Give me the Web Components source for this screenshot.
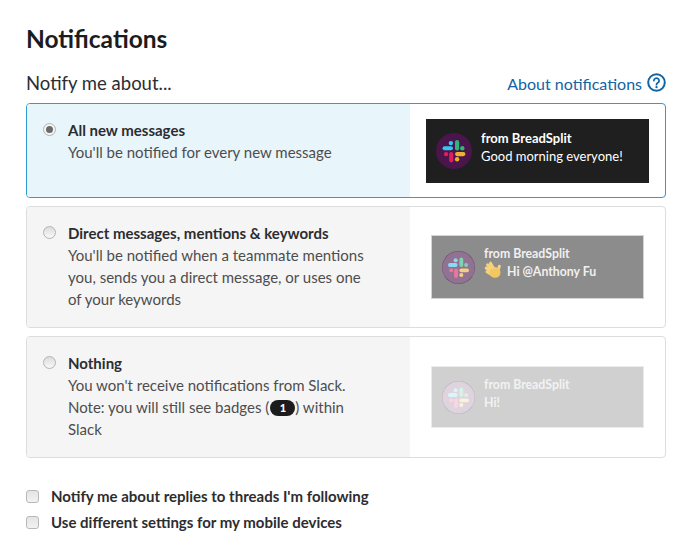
<!DOCTYPE html>
<html>
<head>
<meta charset="utf-8">
<title>Notifications</title>
<style>
	html, body { margin: 0; background: #fff; }
	body { font-family: Lato, "Liberation Sans", sans-serif; color: #1d1c1d; }
</style>
</head>
<body>
<settings-page>
	<notify-option slot="options" label="All new messages" selected>
		You'll be notified for every new message
		<chat-preview slot="preview" kind="full" from="from BreadSplit">Good morning everyone!</chat-preview>
	</notify-option>
	<notify-option slot="options" label="Direct messages, mentions &amp; keywords">
		You'll be notified when a teammate mentions you, sends you a direct message, or uses one of your keywords
		<chat-preview slot="preview" kind="half" from="from BreadSplit" wave>Hi @Anthony Fu</chat-preview>
	</notify-option>
	<notify-option slot="options" label="Nothing">
		You won't receive notifications from Slack.<br>Note: you will still see badges (<count-badge>1</count-badge>) within Slack
		<chat-preview slot="preview" kind="faint" from="from BreadSplit">Hi!</chat-preview>
	</notify-option>
	<check-row slot="checks">Notify me about replies to threads I'm following</check-row>
	<check-row slot="checks">Use different settings for my mobile devices</check-row>
</settings-page>

<script>
class SettingsPage extends HTMLElement {
	constructor() {
		super();
		this.attachShadow({mode: "open"}).innerHTML = `
		<style>
			:host {
				display: block;
				padding: 24px 28px 0 26px;
				font-family: Lato, "Liberation Sans", sans-serif;
			}
			h1 {
				margin: 0;
				font-size: 24.5px;
				line-height: 30px;
				font-weight: 700;
				color: #1d1c1d;
			}
			header {
				display: flex;
				justify-content: space-between;
				align-items: center;
				margin-top: 14px;
				height: 30px;
				font-size: 18.5px;
				color: #2c2d30;
			}
			a {
				display: flex;
				align-items: center;
				gap: 5px;
				margin-top: 1px;
				color: #1264a3;
				font-size: 16px;
				text-decoration: none;
			}
			svg { display: block; margin-top: -2px; }
			#options {
				display: flex;
				flex-direction: column;
				gap: 8px;
				margin-top: 5px;
			}
			#checks {
				display: flex;
				flex-direction: column;
				gap: 4px;
				margin-top: 27px;
			}
		</style>
		<h1>Notifications</h1>
		<header>
			<span>Notify me about...</span>
			<a href="#">About notifications
				<svg width="19" height="19" viewBox="0 0 19 19" fill="none" stroke="#1264a3" stroke-width="2">
					<circle cx="9.5" cy="9.5" r="8.3"/>
					<path d="M6.9 7.6a2.6 2.5 0 1 1 3.9 2.2c-.9.5-1.3 1-1.3 1.9" stroke-linecap="round" stroke-width="1.8"/>
					<circle cx="9.5" cy="14.1" r="1.2" fill="#1264a3" stroke="none"/>
				</svg>
			</a>
		</header>
		<div id="options"><slot name="options"></slot></div>
		<div id="checks"><slot name="checks"></slot></div>
		`;
	}
}

class NotifyOption extends HTMLElement {
	static template = (()=>{
		const t = document.createElement("template");
		t.innerHTML = `
		<style>
			:host {
				display: flex;
				box-sizing: border-box;
				min-height: 122px;
				border: 1px solid #ddd;
				border-radius: 4px;
				overflow: hidden;
				background: #fff;
			}
			:host([selected]) {
				min-height: 95px;
				border-color: #2d9ccf;
			}
			#left {
				box-sizing: border-box;
				flex: 0 0 383px;
				display: flex;
				gap: 12px;
				padding: 15px 40px 0 16px;
				background: #f5f5f5;
			}
			:host([selected]) #left { background: #e8f5fa; }
			#radio {
				box-sizing: border-box;
				flex: none;
				width: 13px;
				height: 13px;
				margin-top: 4px;
				border-radius: 50%;
				border: 1px solid #b4b4b4;
				background: linear-gradient(#dcdcdc, #f8f8f8);
				display: grid;
				place-items: center;
			}
			:host([selected]) #radio { background: #f4f4f4; }
			:host([selected]) #radio::after {
				content: "";
				width: 7px;
				height: 7px;
				border-radius: 50%;
				background: #6a6a6a;
			}
			#label {
				font-size: 15px;
				line-height: 22px;
				font-weight: 700;
				color: #2c2d30;
			}
			#desc {
				font-size: 15px;
				line-height: 22px;
				color: #4d4d4f;
			}
			#right {
				flex: 1;
				display: flex;
				align-items: center;
				padding-left: 21px;
			}
			:host([selected]) #right { padding-left: 16px; }
		</style>
		<div id="left">
			<span id="radio"></span>
			<div>
				<div id="label"></div>
				<div id="desc"><slot></slot></div>
			</div>
		</div>
		<div id="right"><slot name="preview"></slot></div>
		`;
		return t;
	})();

	constructor() {
		super();
		this.attachShadow({mode: "open"});
	}
	connectedCallback() {
		this.shadowRoot.appendChild(NotifyOption.template.content.cloneNode(true));
		this.shadowRoot.querySelector("#label").textContent = this.getAttribute("label");
	}
}

class ChatPreview extends HTMLElement {
	static template = (()=>{
		const t = document.createElement("template");
		t.innerHTML = `
		<style>
			:host {
				display: flex;
				box-sizing: border-box;
				align-items: center;
				gap: 9px;
				width: 213px;
				height: 64px;
				padding-left: 10px;
				border: 1px solid #d4d4d4;
				background: #8c8c8c;
				color: #f0f0f0;
				font-size: 12.3px;
				line-height: 18px;
				font-weight: 700;
			}
			:host([kind="full"]) {
				width: 223px;
				border: 0;
				background: #1f1f1f;
				color: #fff;
				font-size: 13px;
			}
			:host([kind="full"]) #msg { font-weight: 400; }
			:host([kind="faint"]) {
				height: 62px;
				background: #d0d0d0;
				border-color: #ebebeb;
				color: #f2f2f2;
			}
			#logo {
				flex: none;
				width: 33px;
				height: 33px;
				display: block;
			}
			:host([kind="full"]) #logo { width: 36px; height: 36px; }
			#back { display: none; }
			:host([kind="half"]) #back, :host([kind="faint"]) #back { display: block; }
			#text { margin-top: -9px; }
			:host([kind="full"]) #text { margin-top: -7px; }
			:host([kind="faint"]) #text { margin-top: -6px; }
			:host([kind="half"]) #art { opacity: .6; }
			:host([kind="faint"]) #art { opacity: .18; }
			#msg { display: flex; align-items: center; gap: 5px; }
			#wave { display: none; }
			:host([wave]) #wave { display: block; margin-top: -3px; }
		</style>
		<svg id="logo" viewBox="0 0 36 36">
			<circle id="back" cx="18" cy="18" r="17.5" fill="#fff"/>
			<g id="art">
				<circle cx="18" cy="18" r="18" fill="#4a154b"/>
				<g transform="translate(5.5 5.5) scale(1.04)">
					<rect x="1" y="7.4" width="10" height="4" rx="2" fill="#36c5f0"/>
					<circle cx="9" cy="4.4" r="2.1" fill="#36c5f0"/>
					<rect x="13" y="1.5" width="4" height="10" rx="2" fill="#2eb67d"/>
					<circle cx="20" cy="9.4" r="2.1" fill="#2eb67d"/>
					<rect x="13" y="13" width="10" height="4" rx="2" fill="#ecb22e"/>
					<circle cx="15" cy="20" r="2.1" fill="#ecb22e"/>
					<rect x="7.4" y="13" width="4" height="10" rx="2" fill="#e01e5a"/>
					<circle cx="4.4" cy="15" r="2.1" fill="#e01e5a"/>
				</g>
			</g>
		</svg>
		<div id="text">
			<div id="from"></div>
			<div id="msg">
				<svg id="wave" width="18" height="18" viewBox="0 0 18 18">
					<g stroke="#f6d27a" stroke-width="3" stroke-linecap="round" fill="none">
						<path d="M10 8 6.5 2.2M8.5 9 3.6 3.9M7.5 11 2.2 7M7.5 13.5 3 10.8M14 9l1.4-3.8"/>
					</g>
					<ellipse cx="11" cy="11.5" rx="5.5" ry="5.3" fill="#f3c861"/>
					<path d="M6.5 8.5c1.5-2 5-2.8 7-1.2-2.5.3-5 .8-7 1.200z" fill="#f6d27a"/>
				</svg>
				<span><slot></slot></span>
			</div>
		</div>
		`;
		return t;
	})();

	constructor() {
		super();
		this.attachShadow({mode: "open"});
	}
	connectedCallback() {
		this.shadowRoot.appendChild(ChatPreview.template.content.cloneNode(true));
		this.shadowRoot.querySelector("#from").textContent = this.getAttribute("from");
	}
}

class CountBadge extends HTMLElement {
	constructor() {
		super();
		this.attachShadow({mode: "open"}).innerHTML = `
		<style>
			:host {
				display: inline-block;
				width: 25px;
				height: 16px;
				margin: 0 0 0 1px;
				border-radius: 8px;
				background: #1d1c1d;
				color: #fff;
				font-size: 11px;
				line-height: 16px;
				font-weight: 900;
				text-align: center;
				vertical-align: 1px;
			}
		</style>
		<slot></slot>
		`;
	}
}

class CheckRow extends HTMLElement {
	constructor() {
		super();
		this.attachShadow({mode: "open"}).innerHTML = `
		<style>
			:host {
				display: flex;
				align-items: center;
				gap: 12px;
				height: 22px;
				font-size: 15px;
				font-weight: 700;
				color: #2c2d30;
			}
			#box {
				box-sizing: border-box;
				width: 13px;
				height: 13px;
				border: 1px solid #b8b8b8;
				border-radius: 3px;
				background: linear-gradient(#e4e4e4, #f2f2f2);
			}
		</style>
		<span id="box"></span>
		<span><slot></slot></span>
		`;
	}
}

window.customElements.define("settings-page", SettingsPage);
window.customElements.define("notify-option", NotifyOption);
window.customElements.define("chat-preview", ChatPreview);
window.customElements.define("count-badge", CountBadge);
window.customElements.define("check-row", CheckRow);
</script>
</body>
</html>
